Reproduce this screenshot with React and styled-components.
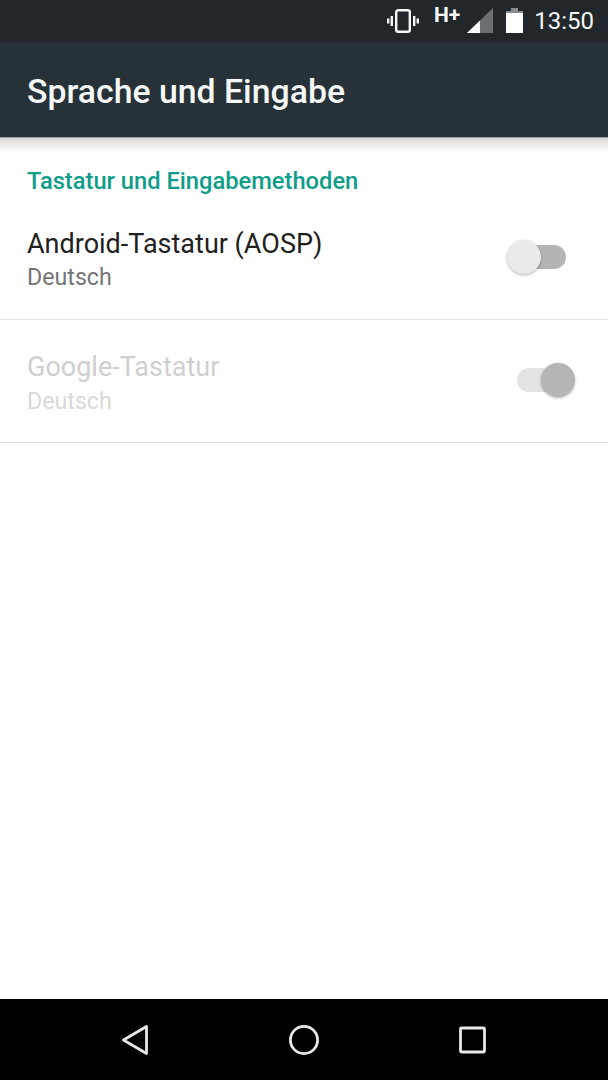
import styled, { createGlobalStyle } from "styled-components";

const GlobalStyle = createGlobalStyle`
  html, body {
    margin: 0;
    padding: 0;
    background: #ffffff;
  }
  * {
    box-sizing: border-box;
  }
`;

const Screen = styled.div`
  width: 608px;
  height: 1080px;
  display: flex;
  flex-direction: column;
  font-family: Roboto, "Liberation Sans", sans-serif;
  background: #ffffff;
  overflow: hidden;
`;

const StatusBar = styled.div`
  height: 42px;
  flex: none;
  background: #21272b;
  display: flex;
  align-items: center;
  justify-content: flex-end;
  padding-right: 14px;
  color: #ffffff;
`;

const StatusIcon = styled.svg`
  display: block;
  flex: none;
  margin-right: ${(props) => props.$gap || 0}px;
`;

const Clock = styled.span`
  font-size: 24px;
  line-height: 42px;
  font-weight: 400;
  color: #f5f6f6;
`;

const NetworkType = styled.span`
  font-size: 21px;
  line-height: 21px;
  font-weight: 700;
  margin-right: 7px;
  margin-bottom: 11px;
  color: #f5f6f6;
`;

const AppBar = styled.header`
  height: 95px;
  flex: none;
  background: #263238;
  display: flex;
  align-items: center;
  padding-left: 27px;
  padding-top: 3px;
  position: relative;
  z-index: 1;
  box-shadow: 0 1px 0 #9a9c9e;
`;

const Title = styled.h1`
  margin: 0;
  font-size: 33.8px;
  font-weight: 500;
  color: #f7f8f8;
`;

const Shade = styled.div`
  height: 16px;
  flex: none;
  background: linear-gradient(#d4d4d4, #f4f4f4 70%, #ffffff);
`;

const Content = styled.main`
  flex: 1;
  display: flex;
  flex-direction: column;
`;

const SectionTitle = styled.h2`
  margin: 0;
  height: 43px;
  padding: 14px 0 0 27px;
  font-size: 23.7px;
  line-height: 28px;
  font-weight: 500;
  color: #0f9d8a;
`;

const Row = styled.div`
  height: ${(props) => props.$height}px;
  padding: ${(props) => props.$top}px 33px 0 27px;
  border-bottom: 1px solid #e2e2e2;
  display: flex;
  justify-content: space-between;
`;

const RowText = styled.div`
  display: flex;
  flex-direction: column;
`;

const RowTitle = styled.div`
  font-size: 27px;
  line-height: 36px;
  color: ${(props) => (props.$disabled ? "#cfcfcf" : "#212121")};
`;

const RowSubtitle = styled.div`
  font-size: 23.2px;
  line-height: 32px;
  margin-top: ${(props) => (props.$disabled ? "0" : "-1px")};
  color: ${(props) => (props.$disabled ? "#d9d9d9" : "#757575")};
`;

const Switch = styled.div`
  width: 68px;
  height: 35px;
  margin-top: 14px;
  flex: none;
  position: relative;
`;

const Track = styled.div`
  position: absolute;
  left: 10px;
  right: 9px;
  top: 5px;
  height: 24px;
  border-radius: 12px;
  background: ${(props) => (props.$on ? "#e4e4e4" : "#b4b4b4")};
`;

const Thumb = styled.div`
  position: absolute;
  top: 0;
  left: ${(props) => (props.$on ? "34px" : "0")};
  width: 34px;
  height: 34px;
  border-radius: 50%;
  background: ${(props) => (props.$on ? "#b5b5b5" : "#eaeaea")};
  box-shadow: 0 1px 3px rgba(0, 0, 0, 0.3);
`;

const NavBar = styled.nav`
  height: 81px;
  flex: none;
  background: #000000;
  display: flex;
  align-items: center;
  justify-content: center;
  gap: 119px;
`;

function App() {
  return (
    <Screen>
      <GlobalStyle />
      <StatusBar>
        <StatusIcon $gap={15} width="32" height="24" viewBox="0 0 32 24" fill="none" stroke="#f5f6f6">
          <rect x="9.2" y="1.2" width="13.6" height="21.6" rx="2" strokeWidth="2.4" />
          <path d="M4.8 7v10M1.2 9.5v5M27.2 7v10M30.8 9.5v5" strokeWidth="2.4" />
        </StatusIcon>
        <NetworkType>H+</NetworkType>
        <StatusIcon $gap={13} width="26" height="26" viewBox="0 0 26 26">
          <path d="M0 25L26 0v25z" fill="#6c7073" />
          <path d="M0 25l13-12.5V25z" fill="#ffffff" />
        </StatusIcon>
        <StatusIcon $gap={11} width="17" height="26" viewBox="0 0 17 26">
          <path d="M5 0h7v3H5z" fill="#8a8d8f" />
          <path d="M0 3h17v3H0z" fill="#8a8d8f" />
          <path d="M0 5h17v20H0z" fill="#ffffff" />
        </StatusIcon>
        <Clock>13:50</Clock>
      </StatusBar>
      <AppBar>
        <Title>Sprache und Eingabe</Title>
      </AppBar>
      <Shade />
      <Content>
        <SectionTitle>Tastatur und Eingabemethoden</SectionTitle>
        <Row $height={124} $top={30}>
          <RowText>
            <RowTitle>Android-Tastatur (AOSP)</RowTitle>
            <RowSubtitle>Deutsch</RowSubtitle>
          </RowText>
          <Switch>
            <Track />
            <Thumb />
          </Switch>
        </Row>
        <Row $height={123} $top={29}>
          <RowText>
            <RowTitle $disabled>Google-Tastatur</RowTitle>
            <RowSubtitle $disabled>Deutsch</RowSubtitle>
          </RowText>
          <Switch>
            <Track $on />
            <Thumb $on />
          </Switch>
        </Row>
      </Content>
      <NavBar>
        <svg width="50" height="50" viewBox="0 0 50 50" fill="none" stroke="#e8e8e8" strokeWidth="2.8" strokeLinejoin="round">
          <path d="M36.5 11.5v27L13.5 25z" />
        </svg>
        <svg width="50" height="50" viewBox="0 0 50 50" fill="none" stroke="#e8e8e8" strokeWidth="2.8">
          <circle cx="25" cy="25" r="13.6" />
        </svg>
        <svg width="50" height="50" viewBox="0 0 50 50" fill="none" stroke="#e8e8e8" strokeWidth="2.8" strokeLinejoin="round">
          <rect x="12.5" y="13" width="24" height="24" rx="1" />
        </svg>
      </NavBar>
    </Screen>
  );
}

export default App;
